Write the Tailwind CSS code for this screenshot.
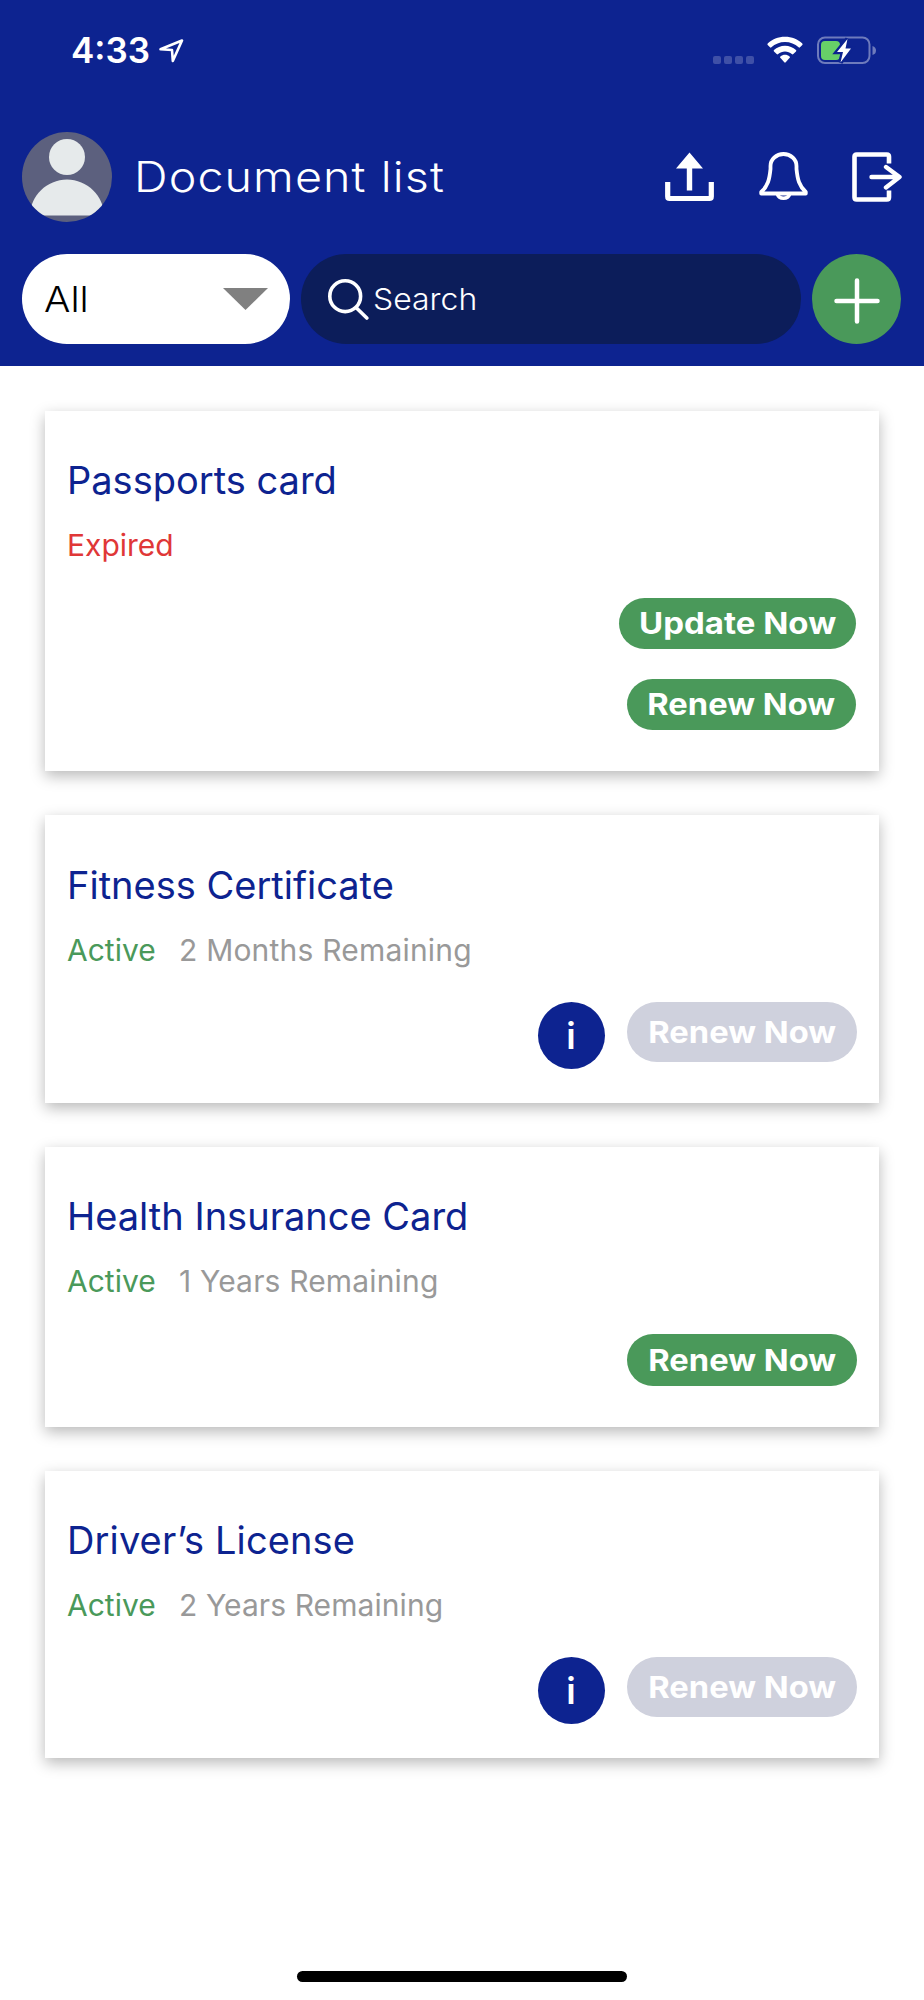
<!DOCTYPE html>
<html lang="en">
<head>
<meta charset="utf-8">
<title>Document list</title>
<script src="https://cdn.jsdelivr.net/npm/@tailwindcss/browser@4"></script>
</head>
<body class="bg-white">
<div class="flex h-[2000px] w-[924px] flex-col overflow-hidden bg-white font-['Inter','Liberation_Sans',sans-serif]">
  <header class="h-[366px] shrink-0 bg-[#0d2390] text-white">
    <!-- Status bar -->
    <div class="flex h-[100px] items-start pl-[71px] pr-[47px] pt-[30px]">
      <span class="w-[87px] whitespace-nowrap text-[35px] font-semibold leading-[41px]">4:33</span>
      <svg class="mt-2 h-[26px] w-[26px]" viewBox="0 0 26 26" fill="none" stroke="#fff" stroke-width="2.6" stroke-linejoin="round"><path d="M2.500 11.300 24 2.500 14.800 23 14 12Z"/></svg>
      <div class="ml-auto flex pt-[6px]">
        <div class="mr-[13.500px] mt-5 flex gap-[3.500px]">
          <span class="size-[7.500px] rounded-[2px] bg-[#3f50a7]"></span><span class="size-[7.500px] rounded-[2px] bg-[#3f50a7]"></span><span class="size-[7.500px] rounded-[2px] bg-[#3f50a7]"></span><span class="size-[7.500px] rounded-[2px] bg-[#3f50a7]"></span>
        </div>
        <svg class="mr-[14px] h-[28px] w-[36px]" viewBox="0 0 36 28" fill="#fff"><path d="M18 .7C24.800 .7 31 3.300 35.300 7.600Q36 8.300 35.300 9L33 11.300Q32.300 12 31.600 11.300C28 8 23.300 6 18 6S8 8 4.400 11.300Q3.700 12 3 11.300L.7 9Q0 8.300 .7 7.600C5 3.300 11.200 .7 18 .7Z"/><path d="M18 9.800C22.300 9.800 26.100 11.400 29 14.100Q29.700 14.800 29 15.500L26.300 18.100Q25.600 18.800 24.800 18.100C23 16.500 20.600 15.500 18 15.500S13 16.500 11.200 18.100Q10.400 18.800 9.700 18.100L7 15.500Q6.300 14.800 7 14.100C9.900 11.400 13.700 9.800 18 9.800Z"/><path d="M18 18.800C19.700 18.800 21.300 19.400 22.600 20.400Q23.300 21 22.700 21.700L18.700 26.300Q18 27.100 17.300 26.300L13.300 21.700Q12.700 21 13.400 20.400C14.700 19.400 16.300 18.800 18 18.800Z"/></svg>
        <svg class="h-[28px] w-[60px]" viewBox="0 0 60 28"><rect x="1" y="1.500" width="51.500" height="25.500" rx="7" fill="none" stroke="#6e7bbc" stroke-width="2"/><path d="M55.500 10Q59 11 59 14.500T55.500 19Z" fill="#6e7bbc"/><rect x="4" y="5" width="19" height="19" rx="4" fill="#67cf68"/><path d="M30.500 3 20 16H26L23.500 26.500 34 12.500H28.500Z" fill="#fff" stroke="#0d2390" stroke-width="4.500" paint-order="stroke"/></svg>
      </div>
    </div>
    <!-- Title row -->
    <div class="flex h-[154px] items-start pl-[22px] pr-[22px] pt-[31.500px]">
      <svg class="size-[90px]" viewBox="0 0 90 90"><clipPath id="av"><circle cx="45" cy="45" r="45"/></clipPath><g clip-path="url(#av)"><rect width="90" height="90" fill="#5c607e"/><circle cx="45" cy="25" r="18" fill="#e6eaeb"/><path d="M8 83.500C8 64 25 47.500 45 47.500S82 64 82 83.500Z" fill="#e6eaeb"/></g></svg>
      <h1 class="ml-[22px] mt-[19.500px] origin-left scale-x-[1.11] whitespace-nowrap text-[42px] font-light leading-[52px] tracking-[1px]">Document list</h1>
      <div class="ml-auto flex pt-5">
        <svg class="mr-[45px] h-[50px] w-[49px]" viewBox="0 0 49 50"><path d="M24.500 .5 38 16.500H27.200V38.500H21.800V16.500H11Z" fill="#fff"/><path d="M2.700 30V44.500Q2.700 46.500 4.700 46.500H44.300Q46.300 46.500 46.300 44.500V30" fill="none" stroke="#fff" stroke-width="5.200"/></svg>
        <svg class="mr-[44px] h-[50px] w-[49px]" viewBox="0 0 49 50" fill="none" stroke="#fff" stroke-width="3.800" stroke-linejoin="round"><path d="M2.200 41.500H46.800V40C40 34 38.500 27 37.500 17V14A13 12 0 0 0 11.500 14V17C10.500 27 9 34 2.200 40Z"/><path d="M18.500 42.500A6.200 5 0 0 0 30.500 42.500" stroke-width="3.600"/></svg>
        <svg class="h-[50px] w-[50px]" viewBox="0 0 50 50" fill="none" stroke="#fff" stroke-width="4.400" stroke-linecap="round" stroke-linejoin="round"><path d="M37 11.500V4.700Q37 2.500 34.800 2.500H4.700Q2.500 2.500 2.500 4.700V45.300Q2.500 47.500 4.700 47.500H34.800Q37 47.500 37 45.300V38.500" stroke-linecap="butt" stroke-width="4.600"/><path d="M19.500 25H47M34 15 47.500 25 34 35.500"/></svg>
      </div>
    </div>
    <!-- Filter row -->
    <div class="flex gap-[11px] pl-[22px]">
      <div class="flex h-[90px] w-[268px] items-center justify-between rounded-full bg-white pl-[22px] pr-[22px] text-black">
        <span class="origin-left scale-x-[1.12] text-[35px] font-light leading-[42px]">All</span>
        <svg class="h-[22px] w-[45px]" viewBox="0 0 45 22"><path d="M0 0H45L22.500 22Z" fill="#808080"/></svg>
      </div>
      <div class="flex h-[90px] w-[500px] items-center rounded-full bg-[#0c1d5a] pl-[27px]">
        <svg class="mr-[3.500px] size-[41px]" viewBox="0 0 41 41" fill="none" stroke="#fff" stroke-width="3.600" stroke-linecap="round"><circle cx="17.200" cy="17.200" r="15.400"/><path d="M28.500 29 38.800 39"/></svg>
        <span class="origin-left scale-x-[1.065] text-[30px] font-light leading-[36px]">Search</span>
      </div>
      <div class="flex h-[90px] w-[89px] items-center justify-center rounded-[50%] bg-[#4a995a]">
        <svg class="mt-[3px] size-[46px]" viewBox="0 0 46 46" stroke="#fff" stroke-width="4.500" stroke-linecap="round"><path d="M23 2.500V43.500M2.500 23H43.500"/></svg>
      </div>
    </div>
  </header>

  <main class="flex flex-col gap-[44.500px] px-[45px] pt-[45px] text-[30px] leading-[36px]">
    <section class="h-[359.500px] bg-white pl-[22px] pr-[23px] pt-[46px] shadow-[0_5px_14px_rgba(0,0,0,0.28)]">
      <h2 class="whitespace-nowrap text-[38px] leading-[46px] text-[#0d2390]">Passports card</h2>
      <p class="mt-6 text-[#e03737]">Expired</p>
      <div class="mt-[34.500px] flex flex-col items-end gap-[29.500px] font-bold text-white">
        <button class="flex h-[51.500px] w-[237px] items-center justify-center rounded-full bg-[#4a995a]"><span class="scale-x-[1.1] whitespace-nowrap">Update Now</span></button>
        <button class="flex h-[51.500px] w-[229px] items-center justify-center rounded-full bg-[#4a995a]"><span class="scale-x-[1.09] whitespace-nowrap">Renew Now</span></button>
      </div>
    </section>
    <section class="h-[287.500px] bg-white pl-[22px] pr-[22px] pt-[46.500px] shadow-[0_5px_14px_rgba(0,0,0,0.28)]">
      <h2 class="whitespace-nowrap text-[38px] leading-[46px] text-[#0d2390]">Fitness Certificate</h2>
      <p class="mt-6 flex text-[#999]"><span class="w-[112px] text-[#4a995a]">Active</span><span class="tracking-[0.2px]">2 Months Remaining</span></p>
      <div class="mt-[34.500px] flex justify-end gap-[22px] font-bold text-white">
        <span class="flex size-[67px] items-center justify-center rounded-full bg-[#0d2390] pr-px text-[36px] font-semibold">i</span>
        <button class="flex h-[60px] w-[230px] items-center justify-center rounded-full bg-[#cfd1dd]"><span class="scale-x-[1.09] whitespace-nowrap">Renew Now</span></button>
      </div>
    </section>
    <section class="h-[279.500px] bg-white pl-[22px] pr-[22px] pt-[46px] shadow-[0_5px_14px_rgba(0,0,0,0.28)]">
      <h2 class="whitespace-nowrap text-[38px] leading-[46px] text-[#0d2390]">Health Insurance Card</h2>
      <p class="mt-6 flex text-[#999]"><span class="w-[112px] text-[#4a995a]">Active</span><span class="tracking-[0.16px]">1 Years Remaining</span></p>
      <div class="mt-[34.500px] flex justify-end font-bold text-white">
        <button class="flex h-[52px] w-[230px] items-center justify-center rounded-full bg-[#4a995a]"><span class="scale-x-[1.09] whitespace-nowrap">Renew Now</span></button>
      </div>
    </section>
    <section class="h-[287px] bg-white pl-[22px] pr-[22px] pt-[46px] shadow-[0_5px_14px_rgba(0,0,0,0.28)]">
      <h2 class="whitespace-nowrap text-[38px] leading-[46px] tracking-[0.12px] text-[#0d2390]">Driver’s License</h2>
      <p class="mt-6 flex text-[#999]"><span class="w-[112px] text-[#4a995a]">Active</span><span class="tracking-[0.08px]">2 Years Remaining</span></p>
      <div class="mt-[34px] flex justify-end gap-[22px] font-bold text-white">
        <span class="flex size-[67px] items-center justify-center rounded-full bg-[#0d2390] pr-px text-[36px] font-semibold">i</span>
        <button class="flex h-[60px] w-[230px] items-center justify-center rounded-full bg-[#cfd1dd]"><span class="scale-x-[1.09] whitespace-nowrap">Renew Now</span></button>
      </div>
    </section>
  </main>
  <div class="mx-auto mb-[18.500px] mt-auto h-[11px] w-[330px] shrink-0 rounded-full bg-black"></div>
</div>
</body>
</html>
